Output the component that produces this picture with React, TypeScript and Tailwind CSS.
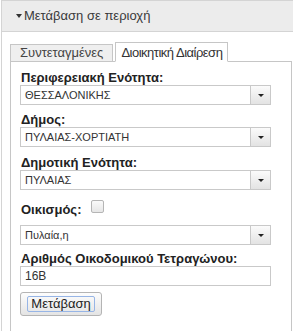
const Caret = () => (
  <span className="block w-0 h-0 border-l-[3px] border-r-[3px] border-t-[3px] border-l-transparent border-r-transparent border-t-[#222]" />
);

const Select = ({ value }: { value: string }) => (
  <div className="flex w-[251px] h-[20px] border border-[#c9c9c9] bg-white">
    <div className="flex-1 pl-[4px] text-[11px] leading-[18px] text-[#333] truncate">{value}</div>
    <div className="w-[20px] flex items-center justify-center border-l border-[#c9c9c9] bg-gradient-to-b from-[#fbfbfb] to-[#e3e3e3]">
      <Caret />
    </div>
  </div>
);

const Label = ({ text, className = "" }: { text: string; className?: string }) => (
  <div className={`pl-[1px] text-[13px] leading-[15px] font-bold text-[#222] ${className}`}>{text}</div>
);

export default function App() {
  return (
    <div className="w-[293px] h-[331px] overflow-hidden bg-white font-['Liberation_Sans',Arial,sans-serif] text-[#333]">
      <div className="ml-[1px] w-[310px] h-[360px] border-l border-t border-[#d4d4d4]">
        {/* accordion header */}
        <div className="h-[31px] flex items-center gap-[2px] pl-[14px] bg-[#ececec] border-b border-[#d4d4d4] text-[13px] text-[#3a3a3a]">
          <span className="block w-0 h-0 border-l-[3px] border-r-[3px] border-t-[4px] border-l-transparent border-r-transparent border-t-[#333]" />
          <span>Μετάβαση σε περιοχή</span>
        </div>

        <div className="pt-[10px] pl-[8px]">
          {/* tabs */}
          <div className="flex items-end gap-[2px] text-[13px] leading-[16px]">
            <div className="h-[18px] px-[9px] mb-[-1px] border border-[#c6c6c6] bg-[#efefef] text-[#444]">
              Συντεταγμένες
            </div>
            <div className="relative z-10 h-[20px] pt-[2px] px-[5px] mb-[-1px] border border-[#c6c6c6] border-b-white bg-white text-[#333] tracking-[-0.5px]">
              Διοικητική Διαίρεση
            </div>
          </div>

          {/* tab panel */}
          <div className="w-[282px] h-[300px] border border-[#c6c6c6] pl-[9px]">
            <Label text="Περιφερειακή Ενότητα:" className="mt-[8px]" />
            <Select value="ΘΕΣΣΑΛΟΝΙΚΗΣ" />

            <Label text="Δήμος:" className="mt-[7px]" />
            <Select value="ΠΥΛΑΙΑΣ-ΧΟΡΤΙΑΤΗ" />

            <Label text="Δημοτική Ενότητα:" className="mt-[8px]" />
            <Select value="ΠΥΛΑΙΑΣ" />

            <div className="mt-[10px] h-[17px] flex items-start gap-[10px]">
              <Label text="Οικισμός:" className="pt-[2px]" />
              <span className="block w-[13px] h-[13px] rounded-[2px] border border-[#b5b5b5] bg-gradient-to-b from-[#fafafa] to-[#e6e6e6]" />
            </div>
            <div className="mt-[8px]">
              <Select value="Πυλαία,η" />
            </div>

            <Label text="Αριθμός Οικοδομικού Τετραγώνου:" className="mt-[6px]" />
            <div className="w-[251px] h-[20px] border border-[#c9c9c9] pl-[4px] text-[12px] leading-[18px] text-[#333]">
              16B
            </div>

            <button className="mt-[6px] w-[82px] h-[24px] flex items-center justify-center rounded-[3px] border border-[#b4b4b4] bg-gradient-to-b from-[#fdfdfd] to-[#e4e4e4]">
              <span className="px-[3px] rounded-[2px] border border-[#97b5e6] text-[13px] leading-[14px] text-[#222]">
                Μετάβαση
              </span>
            </button>
          </div>
        </div>
      </div>
    </div>
  );
}
